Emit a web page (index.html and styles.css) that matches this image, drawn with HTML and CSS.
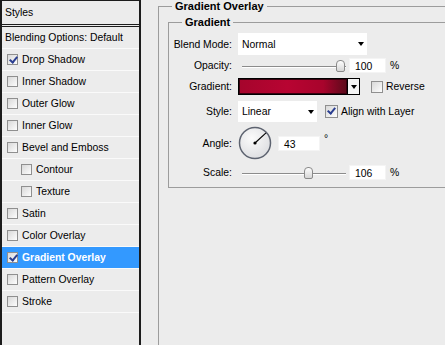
FILE: index.html
```html
<!DOCTYPE html>
<html lang="en">
<head>
    <meta charset="UTF-8">
    <title>Layer Style - Gradient Overlay</title>
    <link rel="stylesheet" href="styles.css">
</head>
<body>
    <div class="dialog">
        <!-- Styles list -->
        <ul class="styles-list">
            <li class="list-head">Styles</li>
            <li class="list-blend">Blending Options: Default</li>
            <li class="item"><span class="check on"></span>Drop Shadow</li>
            <li class="item"><span class="check"></span>Inner Shadow</li>
            <li class="item"><span class="check"></span>Outer Glow</li>
            <li class="item"><span class="check"></span>Inner Glow</li>
            <li class="item"><span class="check"></span>Bevel and Emboss</li>
            <li class="item sub"><span class="check"></span>Contour</li>
            <li class="item sub"><span class="check"></span>Texture</li>
            <li class="item"><span class="check"></span>Satin</li>
            <li class="item"><span class="check"></span>Color Overlay</li>
            <li class="item active"><span class="check on"></span>Gradient Overlay</li>
            <li class="item"><span class="check"></span>Pattern Overlay</li>
            <li class="item"><span class="check"></span>Stroke</li>
        </ul>

        <!-- Settings panel -->
        <div class="panel">
            <fieldset class="group outer">
                <legend>Gradient Overlay</legend>
                <fieldset class="group inner">
                    <legend>Gradient</legend>

                    <div class="row row-blend">
                        <span class="lbl">Blend Mode:</span>
                        <div class="select select-wide">Normal<span class="arrow"></span></div>
                    </div>

                    <div class="row row-opacity">
                        <span class="lbl">Opacity:</span>
                        <div class="slider"><span class="thumb" style="left:94px"></span></div>
                        <div class="num">100</div>
                        <span class="unit">%</span>
                    </div>

                    <div class="row row-gradient">
                        <span class="lbl">Gradient:</span>
                        <div class="swatch">
                            <div class="swatch-fill"></div>
                            <div class="swatch-drop"><span class="arrow"></span></div>
                        </div>
                        <span class="check opt-reverse"></span>
                        <span class="opt-text">Reverse</span>
                    </div>

                    <div class="row row-style">
                        <span class="lbl">Style:</span>
                        <div class="select select-narrow">Linear<span class="arrow"></span></div>
                        <span class="check on opt-align"></span>
                        <span class="opt-text">Align with Layer</span>
                    </div>

                    <div class="row row-angle">
                        <span class="lbl">Angle:</span>
                        <svg class="dial" width="34" height="36" viewBox="0 0 34 36">
                            <defs>
                                <radialGradient id="dialFill" cx="40%" cy="35%" r="70%">
                                    <stop offset="0" stop-color="#fbfbfb"/>
                                    <stop offset="1" stop-color="#dcdde0"/>
                                </radialGradient>
                            </defs>
                            <circle cx="17" cy="18" r="15.5" fill="url(#dialFill)" stroke="#5d6370" stroke-width="1.5"/>
                            <line x1="17" y1="18" x2="28" y2="7.8" stroke="#000" stroke-width="1.1"/>
                            <circle cx="17" cy="18" r="1.6" fill="#000"/>
                        </svg>
                        <div class="num num-angle">43</div>
                        <span class="deg">°</span>
                    </div>

                    <div class="row row-scale">
                        <span class="lbl">Scale:</span>
                        <div class="slider"><span class="thumb" style="left:62px"></span></div>
                        <div class="num">106</div>
                        <span class="unit">%</span>
                    </div>
                </fieldset>
            </fieldset>
        </div>
    </div>
</body>
</html>
```

FILE: styles.css
```css
/* Global */
* {
    box-sizing: border-box;
}

body {
    margin: 0;
    background: #ececec;
    font-family: "Liberation Sans", Arial, sans-serif;
    font-size: 10.4px;
    color: #000;
    overflow: hidden;
}

.dialog {
    display: flex;
    height: 345px;
}

/* Styles list */
.styles-list {
    width: 141px;
    flex: none;
    margin: 0;
    padding: 0;
    list-style: none;
    border: 2px solid #1c1c1c;
    border-top-width: 1px;
    border-bottom: none;
}

.list-head {
    height: 26px;
    line-height: 23px;
    padding-left: 3px;
    border-bottom: 3px double #1c1c1c;
}

.list-blend {
    height: 22px;
    line-height: 21px;
    padding-left: 3px;
    border-bottom: 1px solid #fafafa;
}

.item {
    height: 22px;
    display: flex;
    align-items: center;
    gap: 4px;
    padding-left: 5px;
    border-bottom: 1px solid #fafafa;
}

.item.sub {
    padding-left: 19px;
}

.item.active {
    background: #3399ff;
    color: #fff;
    font-weight: bold;
}

/* Checkbox */
.check {
    position: relative;
    width: 11px;
    height: 11px;
    flex: none;
    border: 1px solid #8f8f8f;
    background: linear-gradient(135deg, #d8d8d8, #fdfdfd);
}

.check.on::after {
    content: '';
    position: absolute;
    left: 3px;
    top: 0;
    width: 3px;
    height: 6px;
    border: solid #2b3f91;
    border-width: 0 2px 2px 0;
    transform: rotate(40deg);
}

/* Settings panel */
.panel {
    flex: 1;
    padding-left: 17px;
    overflow: hidden;
}

.group {
    margin: 0;
    border: 1px solid #9c9c9c;
    min-width: 0;
}

.group legend {
    font-weight: bold;
    font-size: 11px;
    line-height: 13px;
    padding: 0 3px;
}

.outer {
    width: 330px;
    height: 400px;
    padding: 3px 0 0 9px;
}

.outer > legend {
    margin-left: 4px;
}

.inner {
    width: 300px;
    padding: 4px 0 7px 0;
}

.inner > legend {
    margin-left: 13px;
}

/* Form rows */
.row {
    display: flex;
    align-items: center;
}

.row-blend { height: 22px; }
.row-opacity { height: 15px; margin-top: 3px; }
.row-gradient { height: 17px; margin-top: 5px; }
.row-style { height: 21px; margin-top: 6px; }
.row-angle { height: 36px; margin-top: 3px; }
.row-scale { height: 15px; margin-top: 4px; }

.lbl {
    width: 63px;
    margin-right: 6px;
    text-align: right;
    flex: none;
}

.select {
    height: 100%;
    display: flex;
    align-items: center;
    justify-content: space-between;
    padding: 0 3px 0 4px;
    background: #fff;
}

.select-wide { width: 129px; }
.select-narrow { width: 79px; }

.arrow {
    width: 0;
    height: 0;
    border-left: 3.5px solid transparent;
    border-right: 3.5px solid transparent;
    border-top: 4px solid #000;
}

/* Slider */
.slider {
    position: relative;
    width: 104px;
    height: 15px;
    margin-left: 4px;
}

.slider::before {
    content: '';
    position: absolute;
    left: 0;
    right: 0;
    top: 8px;
    height: 1px;
    background: #8c8c8c;
    box-shadow: 0 1px 0 #fff;
}

.thumb {
    position: absolute;
    top: 2px;
    width: 9px;
    height: 12px;
    border: 1px solid #8a8a8a;
    border-radius: 4px 4px 2px 2px;
    background: linear-gradient(#fdfdfd, #d6d6d6);
}

.num {
    width: 37px;
    height: 15px;
    line-height: 15px;
    margin-left: 3px;
    padding-left: 5px;
    background: #fff;
    border: 1px solid #f4f4f4;
}

.num-angle {
    width: 42px;
    margin-left: 6px;
}

.unit {
    margin-left: 4px;
}

.deg {
    align-self: flex-start;
    margin-top: 8px;
    margin-left: 4px;
}

/* Gradient swatch */
.swatch {
    width: 122px;
    height: 17px;
    display: flex;
    border: 1px solid #000;
}

.swatch-fill {
    flex: 1;
    border-right: 1px solid #000;
    box-shadow: inset 0 0 0 1px #3a0010;
    background: linear-gradient(to right, #a5052c 0%, #b80432 45%, #a8042c 78%, #5a0a1a 100%);
}

.swatch-drop {
    width: 11px;
    display: flex;
    align-items: center;
    justify-content: center;
    background: #f4f4f4;
}

.opt-reverse {
    width: 12px;
    height: 12px;
    margin-left: 11px;
}

.opt-align {
    width: 13px;
    height: 13px;
    margin-left: 8px;
}

.opt-align::after {
    left: 4px;
    top: 1px;
}

.opt-text {
    margin-left: 3px;
}

.dial {
    flex: none;
    display: block;
}
```
